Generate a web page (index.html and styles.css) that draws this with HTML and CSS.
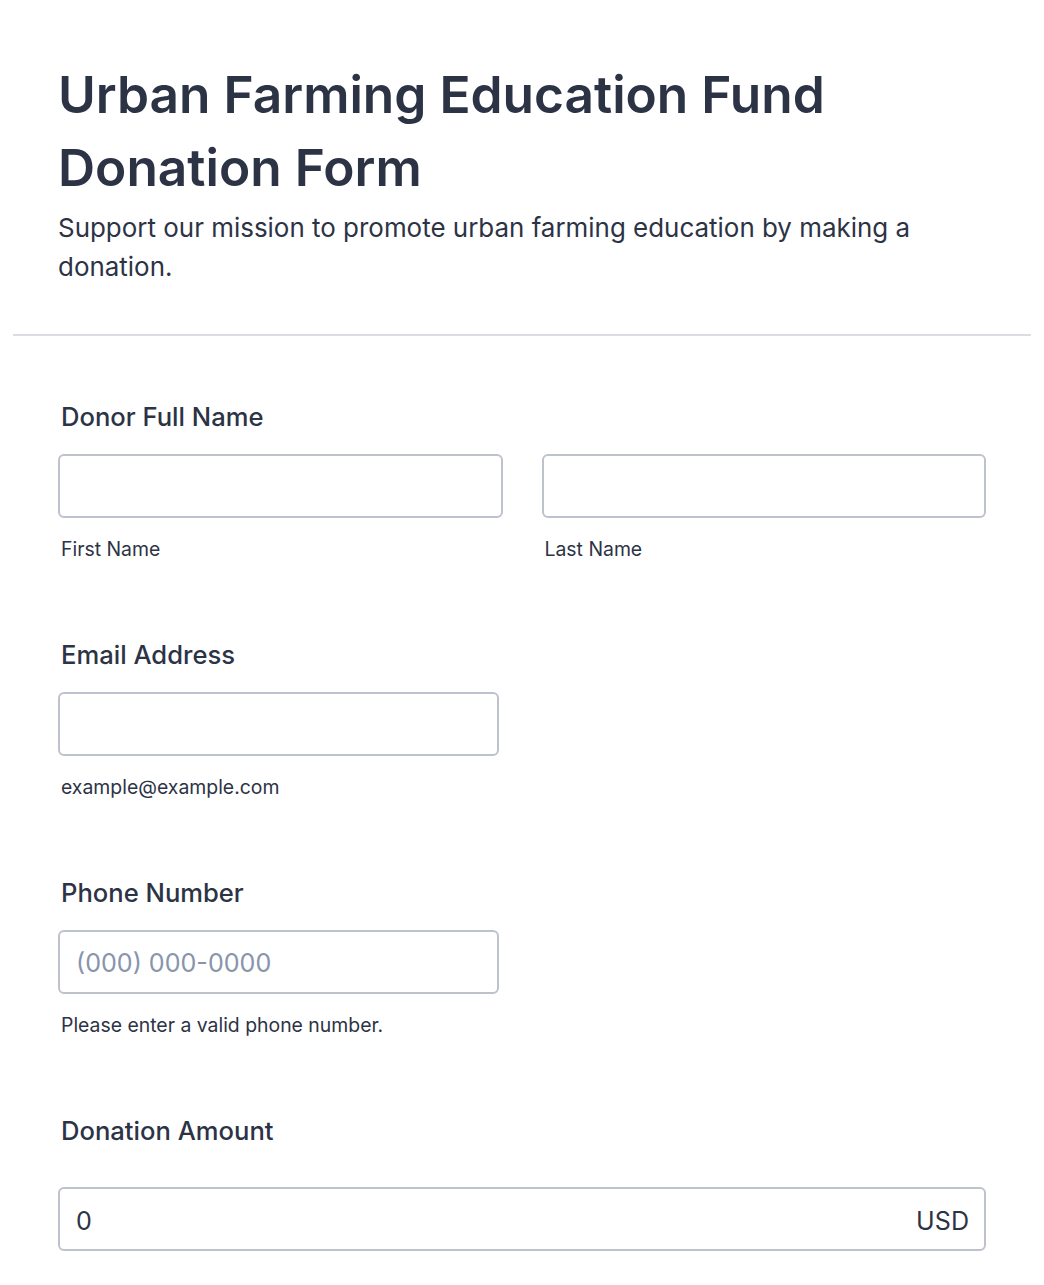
FILE: index.html
```html
<!DOCTYPE html>
<html lang="en">
  <head>
    <meta charset="UTF-8" />
    <meta name="viewport" content="width=device-width, initial-scale=1" />
    <title>Urban Farming Education Fund Donation Form</title>
    <link rel="stylesheet" href="styles.css">
  </head>
  <body>
    <form class="form-card">
      <div class="form-header">
        <h1 class="form-title">Urban Farming Education Fund Donation Form</h1>
        <p class="form-subtitle">
          Support our mission to promote urban farming education by making a
          donation.
        </p>
      </div>

      <div class="form-body">
        <div class="form-line">
          <label class="form-label">Donor Full Name</label>
          <div class="name-grid">
            <div class="field">
              <input type="text" class="form-input" />
              <span class="sublabel">First Name</span>
            </div>
            <div class="field">
              <input type="text" class="form-input" />
              <span class="sublabel">Last Name</span>
            </div>
          </div>
        </div>

        <div class="form-line">
          <label class="form-label">Email Address</label>
          <div class="field field-half">
            <input type="email" class="form-input" />
            <span class="sublabel">example@example.com</span>
          </div>
        </div>

        <div class="form-line">
          <label class="form-label">Phone Number</label>
          <div class="field field-half">
            <input type="tel" class="form-input" placeholder="(000) 000-0000" />
            <span class="sublabel">Please enter a valid phone number.</span>
          </div>
        </div>

        <div class="form-line">
          <label class="form-label label-spaced">Donation Amount</label>
          <div class="amount-wrapper">
            <input type="text" class="amount-input" value="0" />
            <span class="currency">USD</span>
          </div>
        </div>
      </div>
    </form>
  </body>
</html>
```

FILE: styles.css
```css
body {
  margin: 0;
  background-color: #ffffff;
  font-family: "Inter", "Noto Sans", sans-serif;
  color: #2c3345;
}

.form-card {
  margin: 0 13px;
}

.form-header {
  padding: 58px 45px 48px;
  border-bottom: 2px solid #dcdde4;
}

.form-title {
  margin: 0;
  font-size: 51.4px;
  font-weight: 600;
  line-height: 73px;
  color: #2c3345;
}

.form-subtitle {
  margin: 4px 0 0;
  font-size: 25.95px;
  line-height: 39px;
  color: #2c3345;
}

.form-body {
  padding: 63px 45px 0;
}

.form-line {
  margin-bottom: 75px;
}

.form-label {
  display: block;
  margin: 0 0 19px 3px;
  font-size: 25.6px;
  font-weight: 500;
  line-height: 36px;
  color: #2c3345;
}

.label-spaced {
  margin-bottom: 38px;
}

.name-grid {
  display: grid;
  grid-template-columns: 1fr 1fr;
  gap: 39px;
}

.field {
  display: flex;
  flex-direction: column;
}

.field-half {
  width: 441px;
}

.form-input {
  box-sizing: border-box;
  width: 100%;
  height: 64px;
  padding: 2px 16px 0;
  border: 2px solid #bec2cd;
  border-radius: 6px;
  font-family: "Inter", "Noto Sans", sans-serif;
  font-size: 25.1px;
  color: #2c3345;
  background-color: #ffffff;
  outline: none;
}

.form-input::placeholder {
  color: #8894ab;
}

.sublabel {
  margin: 18px 0 0 3px;
  font-size: 19.4px;
  line-height: 26px;
  color: #2c3345;
}

.amount-wrapper {
  box-sizing: border-box;
  display: flex;
  align-items: center;
  height: 64px;
  padding: 3px 15px 0 16px;
  border: 2px solid #bec2cd;
  border-radius: 6px;
}

.amount-input {
  flex: 1;
  border: none;
  outline: none;
  padding: 0;
  font-family: "Inter", "Noto Sans", sans-serif;
  font-size: 25.1px;
  color: #2c3345;
  background: transparent;
}

.currency {
  font-size: 25.1px;
  color: #2c3345;
}
```
